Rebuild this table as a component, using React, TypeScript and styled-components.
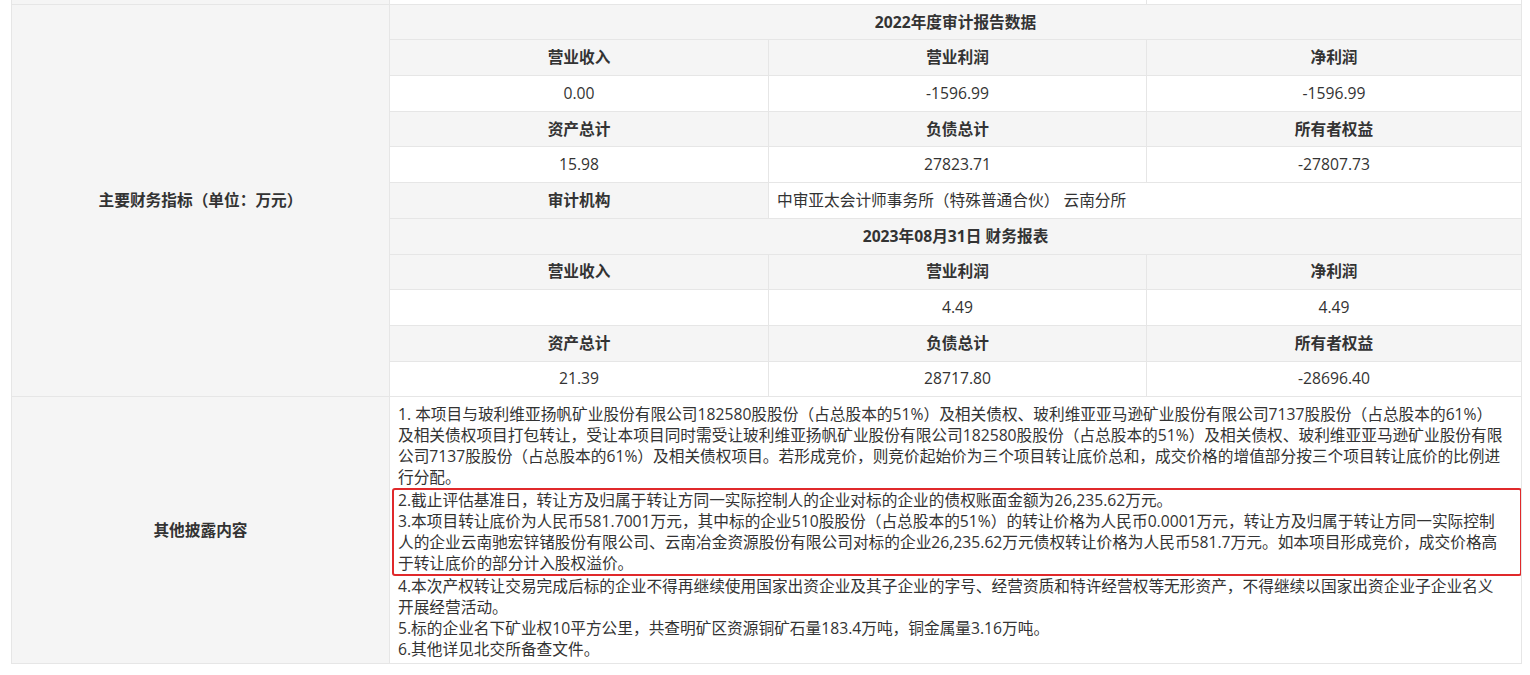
import React from 'react';
import styled, { createGlobalStyle } from 'styled-components';

const GlobalStyle = createGlobalStyle`
  html, body {
    margin: 0;
    padding: 0;
    background: #ffffff;
  }
  body {
    font-family: "Open Sans", "Noto Sans CJK SC", "Noto Sans", sans-serif;
    color: #333333;
    overflow: hidden;
  }
`;

const Page = styled.div`
  padding: 0 9px 0 11px;
  margin-top: -32px;
`;

const Table = styled.table`
  width: 1511px;
  border-collapse: collapse;
  table-layout: fixed;
  font-size: 15.7px;
  line-height: 21px;
`;

type Tone = 'label' | 'head' | 'value';

const Cell = styled.td<{ $tone?: Tone; $align?: 'left' | 'center' }>`
  border: 1px solid #e6e6e6;
  padding: 6.85px 8px;
  background: ${(p) => (p.$tone === 'value' ? '#ffffff' : '#f5f5f5')};
  font-weight: ${(p) => (p.$tone === 'value' ? 400 : 700)};
  text-align: ${(p) => p.$align ?? 'center'};
  vertical-align: middle;
  color: #333333;
  white-space: nowrap;
`;

const NoteCell = styled.td`
  border: 1px solid #e6e6e6;
  padding: 7px 8px 3px;
  background: #ffffff;
  text-align: left;
  vertical-align: top;
  color: #333333;
`;

const NoteBody = styled.div`
  width: 1107px;
`;

const Item = styled.p`
  margin: 0;
`;

const Highlight = styled.div`
  border: 2px solid #e0292b;
  border-radius: 3px;
  margin: 0 -17px 0 -6px;
  padding: 0 15px 0 4px;
`;

type Row = { kind: 'title'; text: string } | { kind: 'head' | 'value'; cells: string[] };

const sections: Row[] = [
  { kind: 'title', text: '2022年度审计报告数据' },
  { kind: 'head', cells: ['营业收入', '营业利润', '净利润'] },
  { kind: 'value', cells: ['0.00', '-1596.99', '-1596.99'] },
  { kind: 'head', cells: ['资产总计', '负债总计', '所有者权益'] },
  { kind: 'value', cells: ['15.98', '27823.71', '-27807.73'] },
];

const sections2: Row[] = [
  { kind: 'title', text: '2023年08月31日 财务报表' },
  { kind: 'head', cells: ['营业收入', '营业利润', '净利润'] },
  { kind: 'value', cells: ['', '4.49', '4.49'] },
  { kind: 'head', cells: ['资产总计', '负债总计', '所有者权益'] },
  { kind: 'value', cells: ['21.39', '28717.80', '-28696.40'] },
];

const renderCells = (row: Row) =>
  row.kind === 'title' ? (
    <Cell $tone="head" colSpan={3}>
      {row.text}
    </Cell>
  ) : (
    row.cells.map((c, i) => (
      <Cell key={i} $tone={row.kind}>
        {c}
      </Cell>
    ))
  );

export default function App() {
  return (
    <>
      <GlobalStyle />
      <Page>
        <Table>
          <colgroup>
            <col style={{ width: 378 }} />
            <col style={{ width: 379 }} />
            <col style={{ width: 378 }} />
            <col />
          </colgroup>
          <tbody>
            <tr>
              <Cell $tone="label">{'\u00a0'}</Cell>
              <Cell $tone="value" colSpan={2}>
                {'\u00a0'}
              </Cell>
              <Cell $tone="value">{'\u00a0'}</Cell>
            </tr>
            {sections.map((row, i) => (
              <tr key={`a${i}`}>
                {i === 0 && (
                  <Cell $tone="label" rowSpan={11}>
                    主要财务指标（单位：万元）
                  </Cell>
                )}
                {renderCells(row)}
              </tr>
            ))}
            <tr>
              <Cell $tone="head">审计机构</Cell>
              <Cell $tone="value" $align="left" colSpan={2}>
                中审亚太会计师事务所（特殊普通合伙） 云南分所
              </Cell>
            </tr>
            {sections2.map((row, i) => (
              <tr key={`b${i}`}>{renderCells(row)}</tr>
            ))}
            <tr>
              <Cell $tone="label">其他披露内容</Cell>
              <NoteCell colSpan={3}>
                <NoteBody>
                  <Item>
                    1. 本项目与玻利维亚扬帆矿业股份有限公司182580股股份（占总股本的51%）及相关债权、玻利维亚亚马逊矿业股份有限公司7137股股份（占总股本的61%）及相关债权项目打包转让，受让本项目同时需受让玻利维亚扬帆矿业股份有限公司182580股股份（占总股本的51%）及相关债权、玻利维亚亚马逊矿业股份有限公司7137股股份（占总股本的61%）及相关债权项目。若形成竞价，则竞价起始价为三个项目转让底价总和，成交价格的增值部分按三个项目转让底价的比例进行分配。
                  </Item>
                  <Highlight>
                    <Item>
                      2.截止评估基准日，转让方及归属于转让方同一实际控制人的企业对标的企业的债权账面金额为26,235.62万元。
                    </Item>
                    <Item>
                      3.本项目转让底价为人民币581.7001万元，其中标的企业510股股份（占总股本的51%）的转让价格为人民币0.0001万元，转让方及归属于转让方同一实际控制人的企业云南驰宏锌锗股份有限公司、云南冶金资源股份有限公司对标的企业26,235.62万元债权转让价格为人民币581.7万元。如本项目形成竞价，成交价格高于转让底价的部分计入股权溢价。
                    </Item>
                  </Highlight>
                  <Item>
                    4.本次产权转让交易完成后标的企业不得再继续使用国家出资企业及其子企业的字号、经营资质和特许经营权等无形资产，不得继续以国家出资企业子企业名义开展经营活动。
                  </Item>
                  <Item>5.标的企业名下矿业权10平方公里，共查明矿区资源铜矿石量183.4万吨，铜金属量3.16万吨。</Item>
                  <Item>6.其他详见北交所备查文件。</Item>
                </NoteBody>
              </NoteCell>
            </tr>
          </tbody>
        </Table>
      </Page>
    </>
  );
}
